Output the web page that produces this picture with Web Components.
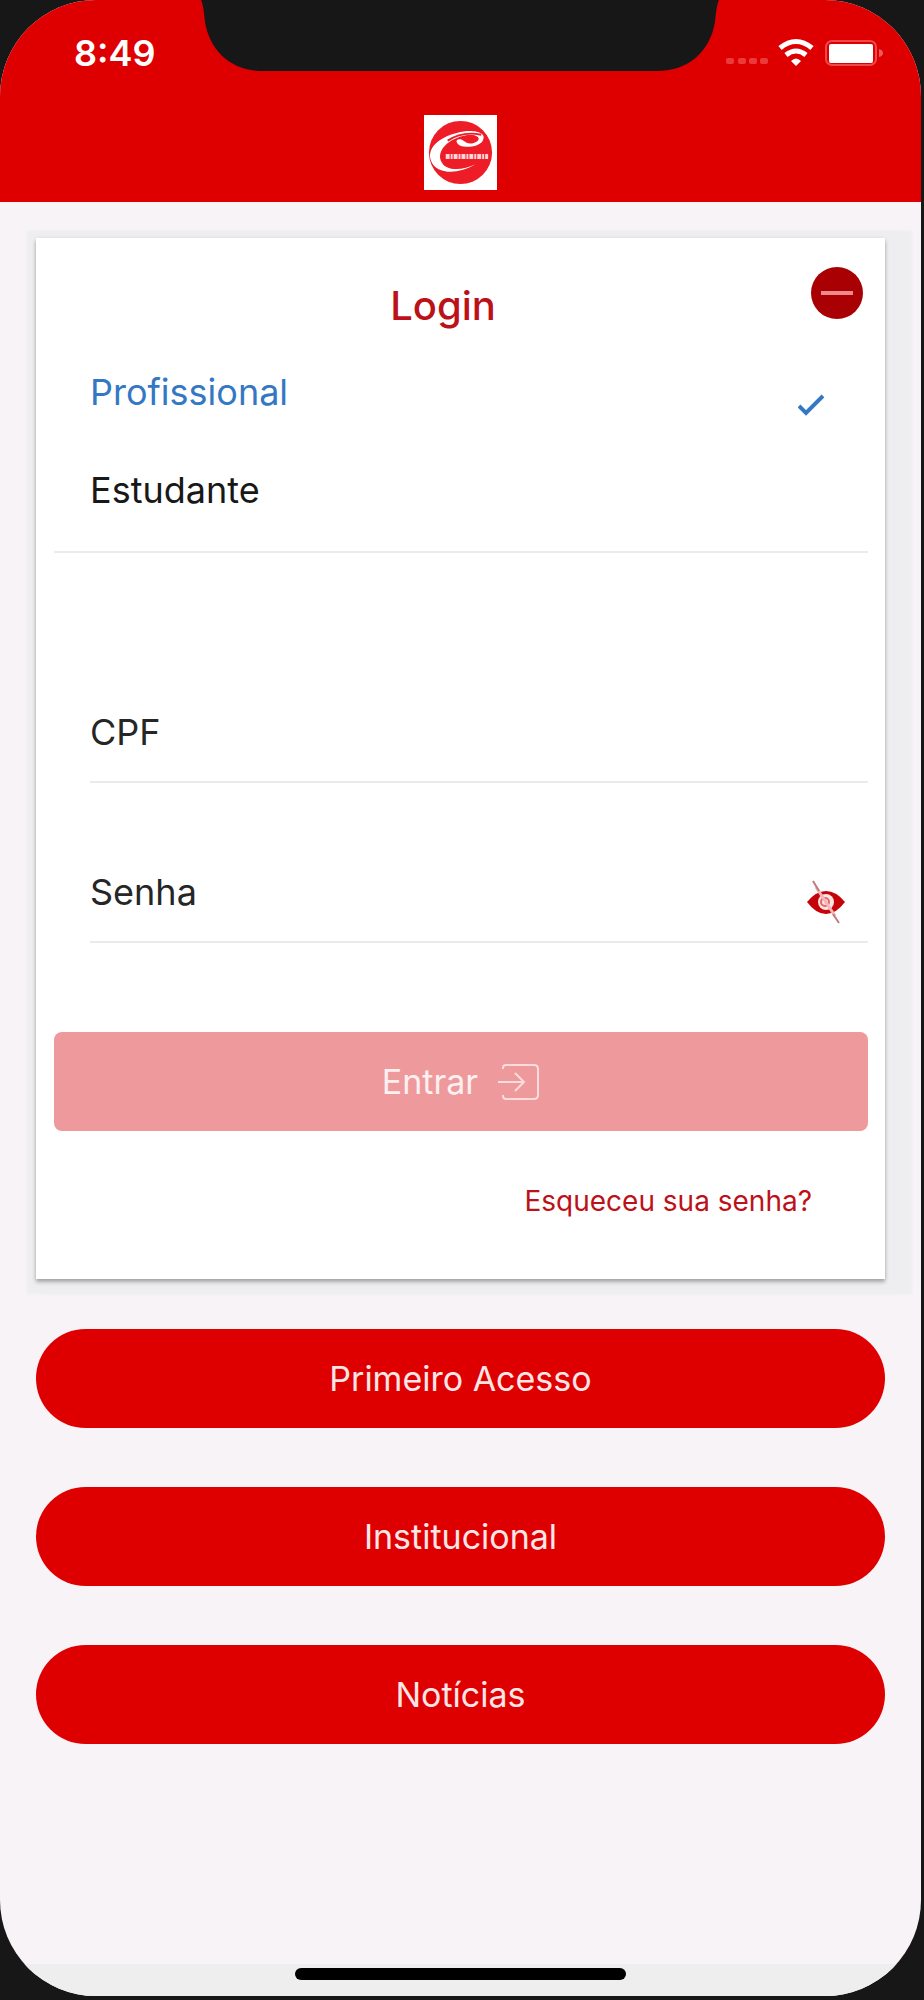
<!DOCTYPE html>
<html lang="pt-BR">
<head>
  <meta charset="UTF-8">
  <meta name="viewport" content="width=device-width, initial-scale=1">
  <title>Login</title>
  <style>
    body {
      margin: 0;
      background-color: #171717;
      font-family: Inter, "Liberation Sans", sans-serif;
      font-size: 34px;
      --primary-color: #de0000;
      --dark-color: #a80003;
      --link-color: #bd1119;
      --active-color: #3478c4;
      --line-color: #ebebeb;
      --label-size: 36px;
    }
  </style>
</head>
<body>
  <phone-screen>
    <status-bar slot="status" time="8:49"></status-bar>
    <app-header slot="header"></app-header>
    <login-card title-text="Login">
      <profile-option name="profissional" checked>Profissional</profile-option>
      <profile-option name="estudante">Estudante</profile-option>
      <form-field slot="fields" label="CPF" type="text"></form-field>
      <form-field slot="fields" label="Senha" type="password"></form-field>
    </login-card>
    <pill-button>Primeiro Acesso</pill-button>
    <pill-button>Institucional</pill-button>
    <pill-button>Notícias</pill-button>
  </phone-screen>

  <script>
    class BaseElement extends HTMLElement {
      constructor() {
        super();
        this.attachShadow({ mode: "open" });
      }

      connectedCallback() {
        const template = document.createElement("template");
        template.innerHTML = this.getStyles() + this.getTemplate();
        this.shadowRoot.replaceChildren(template.content.cloneNode(true));
      }
    }

    class PhoneScreen extends BaseElement {
      getStyles() {
        return /*html*/ `
          <style>
            :host {
              display: flex;
              flex-direction: column;
              box-sizing: border-box;
              min-height: 100vh;
              padding: 0 3px 4px 0;
            }
            .screen {
              position: relative;
              flex: 1;
              display: flex;
              flex-direction: column;
              overflow: hidden;
              border-radius: 96px;
              background-color: #f7f3f7;
            }
            .notch {
              position: absolute;
              top: 0;
              left: 50%;
              width: 520px;
              height: 71px;
              margin-left: -260px;
            }
            .top {
              background-color: var(--primary-color);
            }
            main {
              flex: 1;
              display: flex;
              flex-direction: column;
              gap: 59px;
              padding: 36px;
            }
            .bottom {
              display: flex;
              justify-content: center;
              height: 32px;
              background-color: #eee;
            }
            .bottom span {
              width: 36%;
              height: 12px;
              margin-top: 4px;
              border-radius: 6px;
              background-color: #000;
            }
          </style>
        `;
      }
      getTemplate() {
        return /*html*/ `
          <div class="screen">
            <div class="top">
              <slot name="status"></slot>
              <slot name="header"></slot>
            </div>
            <svg class="notch" viewBox="0 0 520 71" aria-hidden="true">
              <path fill="#171717" d="M0 0 C2 4 3 12 4 22 C9 51 30 71 62 71 H456 C488 71 509 51 514 22 C515 12 516 4 518 0 Z"/>
            </svg>
            <main><slot></slot></main>
            <div class="bottom"><span></span></div>
          </div>
        `;
      }
    }
    customElements.define("phone-screen", PhoneScreen);

    class StatusBar extends BaseElement {
      getStyles() {
        return /*html*/ `
          <style>
            :host {
              display: flex;
              justify-content: space-between;
              align-items: center;
              height: 106px;
              padding: 0 36px 0 74px;
              color: #fff;
            }
            time {
              font-size: 36px;
              font-weight: 600;
            }
            svg {
              display: block;
            }
          </style>
        `;
      }
      getTemplate() {
        return /*html*/ `
          <time>${this.getAttribute("time") ?? ""}</time>
          <svg width="160" height="30" viewBox="0 0 160 30" aria-hidden="true">
            <g fill="#ec3a3a">
              <rect x="1" y="20" width="8" height="6" rx="2"/>
              <rect x="13" y="20" width="8" height="6" rx="2"/>
              <rect x="24" y="20" width="8" height="6" rx="2"/>
              <rect x="35" y="20" width="8" height="6" rx="2"/>
            </g>
            <path fill="none" stroke="#fff" stroke-width="5" d="M55 10 Q71 -3 87 10 M61 17 Q71 9 81 17"/>
            <path fill="#fff" d="M66 23 Q71 18 76 23 L71 28 Z"/>
            <rect x="101" y="3" width="50" height="24" rx="6" fill="none" stroke="#ec4a4a" stroke-width="2"/>
            <rect x="104" y="6" width="44" height="19" rx="2" fill="#fff"/>
            <path fill="#ec5a5a" d="M154 11 Q158 12 158 15 Q158 18 154 19 Z"/>
          </svg>
        `;
      }
    }
    customElements.define("status-bar", StatusBar);

    class AppHeader extends BaseElement {
      getStyles() {
        return /*html*/ `
          <style>
            :host {
              display: flex;
              justify-content: center;
              padding: 9px 0 12px;
            }
            svg {
              display: block;
              background-color: #fff;
            }
          </style>
        `;
      }
      getTemplate() {
        return /*html*/ `
          <svg width="73" height="75" viewBox="0 0 74 76" role="img" aria-label="Logo">
            <circle cx="37" cy="38" r="32" fill="#ed1c27"/>
            <path fill="#fff" d="M33 27 C35 34 52 34 59 27 C66 17 48 14 34 18 C14 23 3 34 7 46 C12 60 34 61 52 50 C38 57 21 57 17 46 C13 34 28 22 46 20 C57 20 58 26 51 28 C46 30 43 28 40 26 C37 24 33 24 33 27 Z"/>
            <path fill="none" stroke="#ed1c27" stroke-width="2" d="M24 26 Q39 16 58 20"/>
            <path fill="none" stroke="#ffd5d7" stroke-width="5" stroke-dasharray="4 1 2 1" d="M22 42 H65"/>
          </svg>
        `;
      }
    }
    customElements.define("app-header", AppHeader);

    class LoginCard extends BaseElement {
      getStyles() {
        return /*html*/ `
          <style>
            :host {
              display: block;
              margin-bottom: -9px;
            }
            form {
              position: relative;
              padding: 44px 17px 58px 18px;
              background-color: #fff;
              box-shadow: 0 3px 4px rgba(0, 0, 0, .3), 0 0 4px rgba(0, 0, 0, .06), 2px 4px 2px 11px #eeedef, 16px 4px 2px 11px #eeedef;
            }
            h1 {
              margin: 0 36px 13px 0;
              color: var(--link-color);
              font-size: 40px;
              font-weight: 500;
              line-height: 48px;
              text-align: center;
            }
            .minus {
              position: absolute;
              top: 29px;
              right: 22px;
              display: flex;
              align-items: center;
              justify-content: center;
              width: 52px;
              height: 52px;
              padding: 0;
              border: 0;
              border-radius: 50%;
              background-color: var(--dark-color);
            }
            .minus span {
              width: 32px;
              height: 4px;
              background-color: #ef8a8c;
            }
            fieldset {
              min-width: 0;
              margin: 0;
              padding: 0 0 12px;
              border: 0;
              border-bottom: 2px solid var(--line-color);
            }
            .fields {
              display: flex;
              flex-direction: column;
              gap: 60px;
              padding: 130px 0 89px 36px;
            }
            .submit {
              display: flex;
              align-items: center;
              justify-content: center;
              gap: 20px;
              width: 100%;
              height: 99px;
              border: 0;
              border-radius: 8px;
              background-color: #ee999c;
              color: #fff0f0;
              font: inherit;
            }
            .forgot {
              display: block;
              margin: 50px 56px 0 0;
              color: var(--link-color);
              font-size: 28px;
              line-height: 40px;
              text-align: right;
              text-decoration: none;
            }
          </style>
        `;
      }
      getTemplate() {
        return /*html*/ `
          <form>
            <h1>${this.getAttribute("title-text") ?? ""}</h1>
            <button class="minus" type="button" aria-label="Recolher"><span></span></button>
            <fieldset aria-label="Perfil"><slot></slot></fieldset>
            <div class="fields"><slot name="fields"></slot></div>
            <button class="submit" type="button">
              Entrar
              <svg width="42" height="38" viewBox="0 0 42 38" fill="none" stroke="#ffdcdc" stroke-width="2" aria-hidden="true">
                <path d="M5 6 V5 Q5 2 8 2 H36 Q40 2 40 6 V32 Q40 36 36 36 H8 Q5 36 5 33 V32"/>
                <path d="M0 19 H26 M17 10 L26 19 L17 28"/>
              </svg>
            </button>
            <a class="forgot" href="#">Esqueceu sua senha?</a>
          </form>
        `;
      }
    }
    customElements.define("login-card", LoginCard);

    class ProfileOption extends BaseElement {
      getStyles() {
        return /*html*/ `
          <style>
            :host {
              display: block;
              font-size: var(--label-size);
            }
            label {
              display: flex;
              align-items: center;
              justify-content: space-between;
              height: 98px;
              padding: 0 44px 0 36px;
              color: #181818;
            }
            :host([checked]) label {
              color: var(--active-color);
            }
            input {
              appearance: none;
              width: 0;
              height: 0;
              margin: 0;
            }
            span {
              flex: 1;
            }
            svg {
              display: none;
              margin-top: 26px;
            }
            :host([checked]) svg {
              display: block;
            }
          </style>
        `;
      }
      getTemplate() {
        return /*html*/ `
          <label>
            <input type="radio" name="${this.getAttribute("name") ?? ""}" ${this.hasAttribute("checked") ? "checked" : ""}>
            <span><slot></slot></span>
            <svg width="26" height="24" viewBox="0 0 26 24" fill="none" stroke="currentColor" stroke-width="4" aria-hidden="true">
              <path d="M1 13 L8 20 L25 3"/>
            </svg>
          </label>
        `;
      }
    }
    customElements.define("profile-option", ProfileOption);

    class FormField extends BaseElement {
      getStyles() {
        return /*html*/ `
          <style>
            :host {
              display: flex;
              align-items: center;
              height: 98px;
              border-bottom: 2px solid var(--line-color);
              color: #262626;
              font-size: var(--label-size);
            }
            input {
              flex: 1;
              min-width: 0;
              height: 60px;
              margin-left: 16px;
              padding: 0;
              border: 0;
              outline: 0;
              background: none;
              color: inherit;
              font: inherit;
            }
            button {
              margin: 20px 22px 0 0;
              padding: 0;
              border: 0;
              background: none;
            }
            svg {
              display: block;
            }
          </style>
        `;
      }
      getTemplate() {
        const type = this.getAttribute("type") ?? "text";
        const eye = /*html*/ `
          <button type="button" aria-label="Mostrar senha">
            <svg width="40" height="46" viewBox="0 0 40 46" aria-hidden="true">
              <path fill="#c40408" d="M1 23 Q10 12 20 12 Q30 12 39 23 Q30 35 20 35 Q10 35 1 23 Z"/>
              <circle cx="20" cy="23" r="8" fill="#fbe4e4"/>
              <circle cx="19" cy="23" r="4" fill="none" stroke="#e0666a" stroke-width="2"/>
              <path stroke="#f6b5b8" stroke-width="3" d="M10 8 L29 37"/>
              <path stroke="#c07c7e" stroke-width="2" d="M7 2 L13 12 M27 35 L33 44"/>
            </svg>
          </button>
        `;
        return /*html*/ `
          <label for="field">${this.getAttribute("label") ?? ""}</label>
          <input id="field" type="${type}">
          ${type === "password" ? eye : ""}
        `;
      }
    }
    customElements.define("form-field", FormField);

    class PillButton extends BaseElement {
      getStyles() {
        return /*html*/ `
          <style>
            :host {
              display: block;
            }
            button {
              display: block;
              width: 100%;
              height: 99px;
              border: 0;
              border-radius: 50px;
              background-color: var(--primary-color);
              color: #ffe6e6;
              font: inherit;
            }
          </style>
        `;
      }
      getTemplate() {
        return /*html*/ `<button type="button"><slot></slot></button>`;
      }
    }
    customElements.define("pill-button", PillButton);
  </script>
</body>
</html>
